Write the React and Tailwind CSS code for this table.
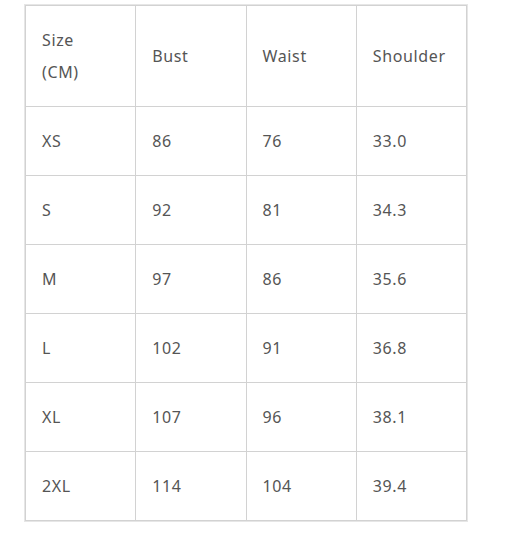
export default function App() {
  const rows = [
    ["XS", "86", "76", "33.0"],
    ["S", "92", "81", "34.3"],
    ["M", "97", "86", "35.6"],
    ["L", "102", "91", "36.8"],
    ["XL", "107", "96", "38.1"],
    ["2XL", "114", "104", "39.4"],
  ];
  const cell = "border border-[#d2d2d2] px-4 py-[18px] text-left align-middle font-normal";
  return (
    <div className="min-h-[543px] w-[518px] bg-white pt-[4px] pl-[24px]" style={{ fontFamily: '"Noto Sans", sans-serif' }}>
      <div className="w-[444px] border border-[#e6e6e6]">
        <table className="w-[442px] table-fixed border-collapse text-[16px] leading-[32px] tracking-[0.04em] text-[#555]">
          <thead>
            <tr>
              <th className={cell}>Size<br />(CM)</th>
              <th className={cell}>Bust</th>
              <th className={cell}>Waist</th>
              <th className={cell}>Shoulder</th>
            </tr>
          </thead>
          <tbody>
            {rows.map((r) => (
              <tr key={r[0]}>
                {r.map((v, i) => (
                  <td key={i} className={cell}>{v}</td>
                ))}
              </tr>
            ))}
          </tbody>
        </table>
      </div>
    </div>
  );
}
